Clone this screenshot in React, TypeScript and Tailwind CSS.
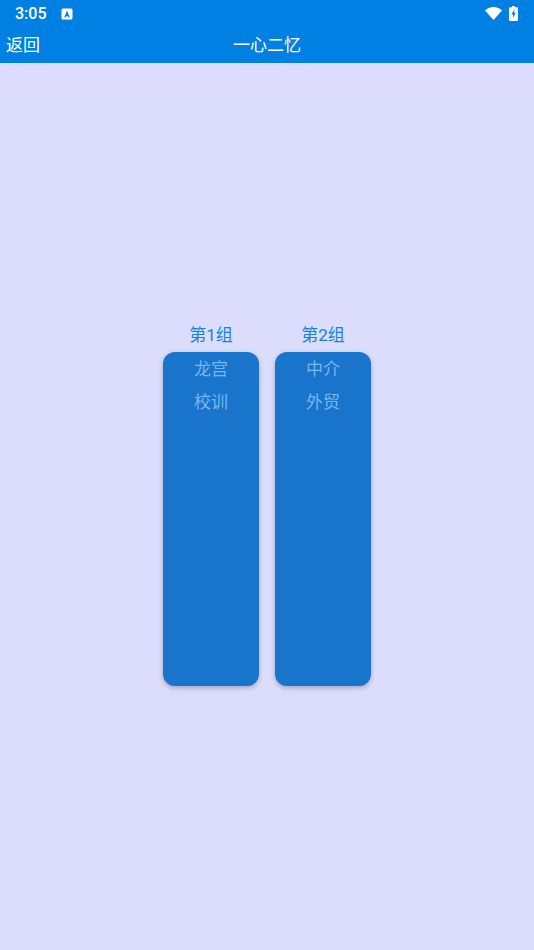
const cjk = "font-['Roboto','Noto_Sans_CJK_SC',sans-serif]";

const groups = [
  { title: '第1组', words: ['龙宫', '校训'] },
  { title: '第2组', words: ['中介', '外贸'] },
];

function StatusBar() {
  return (
    <div className="flex h-[27px] items-center justify-between pl-[15px] pr-[16px] text-white">
      <div className="flex items-center gap-[14px]">
        <span className="text-[16px] leading-none font-medium">3:05</span>
        <svg width="12" height="12" viewBox="0 0 12 12">
          <rect x="0.5" y="0.5" width="11" height="11" rx="1.5" fill="#fff" />
          <path d="M6 2.5 8.8 9.500H7.500L7 8.200H5L4.500 9.500H3.200Z" fill="#0080e2" />
        </svg>
      </div>
      <div className="flex items-center gap-[7px]">
        <svg width="17" height="13" viewBox="0 0 17 13">
          <path d="M0 3.600C2.200 1.400 5.200 0 8.500 0s6.300 1.400 8.500 3.600L8.500 13Z" fill="#fff" />
        </svg>
        <svg width="9" height="15" viewBox="0 0 9 15">
          <path d="M3 0h3v1.300h2a1 1 0 0 1 1 1V14a1 1 0 0 1-1 1H1a1 1 0 0 1-1-1V2.300a1 1 0 0 1 1-1h2Z" fill="#fff" />
          <path d="M5.400 3 2.400 8.500h1.800l-.5 4L6.800 6.800H5Z" fill="#0080e2" />
        </svg>
      </div>
    </div>
  );
}

export default function App() {
  return (
    <div className={`flex h-[950px] w-[534px] flex-col bg-[#dcdcfc] ${cjk}`}>
      <div className="h-[63px] shrink-0 bg-[#0080e2]">
        <StatusBar />
        <div className="relative flex h-[36px] items-center justify-center pt-[2px] text-[17px] text-white">
          <span className="absolute left-[6px]">返回</span>
          <span>一心二忆</span>
        </div>
      </div>

      <div className="flex justify-center gap-[16px] pt-[259px]">
        {groups.map((g) => (
          <div key={g.title} className="flex w-[96px] flex-col items-center">
            <div className="flex h-[30px] items-center pb-[2px] text-[17px] text-[#0f83e6]">{g.title}</div>
            <div className="flex h-[334px] w-full flex-col items-center rounded-[12px] bg-[#1875cb] pt-[1px] shadow-[0_2px_5px_rgba(0,0,0,0.25)]">
              {g.words.map((w) => (
                <div key={w} className="flex h-[33px] items-center text-[17px] text-[#7ab6ec]">
                  {w}
                </div>
              ))}
            </div>
          </div>
        ))}
      </div>
    </div>
  );
}
